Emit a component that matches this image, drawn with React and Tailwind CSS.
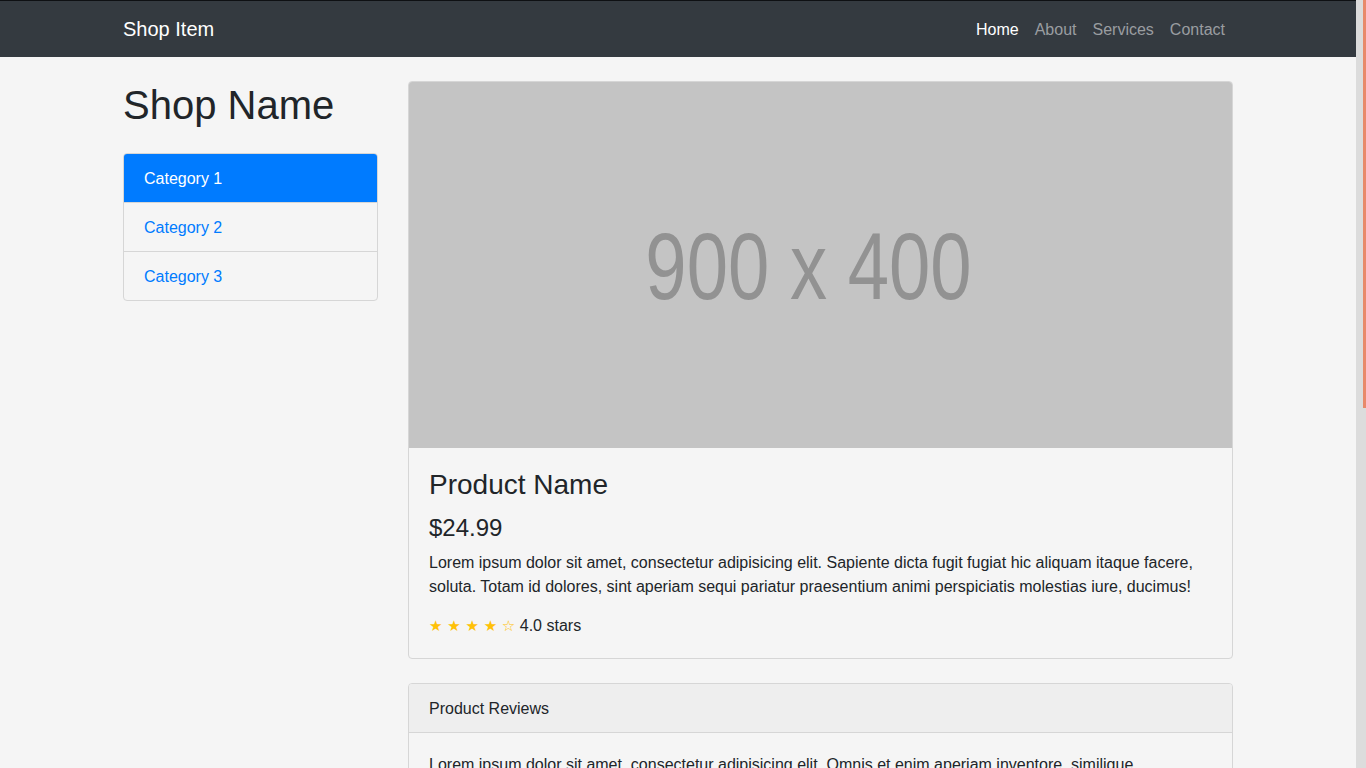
import React from "react";

const font = { fontFamily: '"Liberation Sans", Arial, sans-serif' };

const reviewText =
  "Lorem ipsum dolor sit amet, consectetur adipisicing elit. Omnis et enim aperiam inventore, similique necessitatibus neque non! Doloribus, modi sapiente laboriosam aperiam fugiat laborum. Sequi mollitia, necessitatibus quae sint natus.";

function Navbar() {
  const links = ["Home", "About", "Services", "Contact"];
  return (
    <nav className="bg-[#343a40] border-t border-[#0e1013]">
      <div className="max-w-[1140px] mx-auto px-[15px] h-[56px] flex items-center justify-between">
        <a href="#" className="text-white text-[20px] leading-[30px]">
          Shop Item
        </a>
        <ul className="flex">
          {links.map((l, i) => (
            <li key={l}>
              <a
                href="#"
                className={`block px-2 pt-[9px] pb-[7px] text-[16px] leading-6 ${
                  i === 0 ? "text-white" : "text-[#9a9da0]"
                }`}
              >
                {l}
              </a>
            </li>
          ))}
        </ul>
      </div>
    </nav>
  );
}

function Sidebar() {
  return (
    <div className="w-[285px] px-[15px] shrink-0">
      <h1 className="mt-6 mb-6 text-[40px] leading-[48px] text-[#212529]">Shop Name</h1>
      <div className="flex flex-col rounded border border-[#d6d6d6] overflow-hidden">
        <a href="#" className="px-5 pt-[13px] pb-[11px] leading-6 bg-[#007bff] text-white">
          Category 1
        </a>
        <a href="#" className="px-5 pt-[13px] pb-[11px] leading-6 text-[#007bff] border-t border-[#d6d6d6]">
          Category 2
        </a>
        <a href="#" className="px-5 pt-[13px] pb-[11px] leading-6 text-[#007bff] border-t border-[#d6d6d6]">
          Category 3
        </a>
      </div>
    </div>
  );
}

function ProductCard() {
  return (
    <div className="mt-6 rounded border border-[#d6d6d6] overflow-hidden">
      <div className="h-[366px] bg-[#c4c4c4] flex items-center justify-center pr-[24px] pt-[3px]">
        <span className="inline-block text-[94px] leading-none text-[#929292] scale-x-[0.79]">
          900 x 400
        </span>
      </div>
      <div className="p-5">
        <h3 className="text-[28px] leading-[33.6px] mb-3 text-[#212529]">Product Name</h3>
        <h4 className="text-[24px] leading-[28.8px] mb-2 text-[#212529]">$24.99</h4>
        <p className="pt-px mb-[14px] leading-6 text-[#212529]">
          Lorem ipsum dolor sit amet, consectetur adipisicing elit. Sapiente dicta fugit fugiat hic
          aliquam itaque facere, soluta. Totam id dolores, sint aperiam sequi pariatur praesentium
          animi perspiciatis molestias iure, ducimus!
        </p>
        <div className="pt-px leading-6 text-[#212529]">
          <span className="text-[#ffc107] text-[15px]" style={{ fontFamily: '"DejaVu Sans", sans-serif' }}>
            ★ ★ ★ ★ ☆
          </span>{" "}
          4.0 stars
        </div>
      </div>
    </div>
  );
}

function Reviews() {
  return (
    <div className="my-6 rounded border border-[#d6d6d6] overflow-hidden">
      <div className="px-5 pt-[13px] pb-[11px] leading-6 bg-[#eeeeee] border-b border-[#d6d6d6] text-[#212529]">
        Product Reviews
      </div>
      <div className="p-5 text-[#212529]">
        {[0, 1, 2].map((i) => (
          <div key={i}>
            <p className="mb-4 leading-6">{reviewText}</p>
            <small className="text-[13px] text-[#6c757d]">Posted by Anonymous on 3/1/17</small>
            <hr className="my-4 border-[#dcdcdc]" />
          </div>
        ))}
        <a href="#" className="inline-block px-3 py-[6px] leading-6 rounded bg-[#28a745] text-white">
          Leave a Review
        </a>
      </div>
    </div>
  );
}

export default function App() {
  return (
    <div style={font} className="h-screen flex bg-[#f5f5f5] text-[16px]">
      <div className="flex-1 h-full overflow-y-auto [scrollbar-width:none]">
        <Navbar />
        <div className="max-w-[1140px] mx-auto flex">
          <Sidebar />
          <div className="flex-1 px-[15px]">
            <ProductCard />
            <Reviews />
          </div>
        </div>
        <footer className="py-12 bg-[#343a40]">
          <p className="text-center text-white leading-6">Copyright © Your Website 2017</p>
        </footer>
      </div>
      {/* scrollbar track */}
      <div className="w-[10px] h-full bg-[#dcdcdc] flex justify-end">
        <div className="w-[3px] h-[408px] bg-[#e8896a]" />
      </div>
    </div>
  );
}
